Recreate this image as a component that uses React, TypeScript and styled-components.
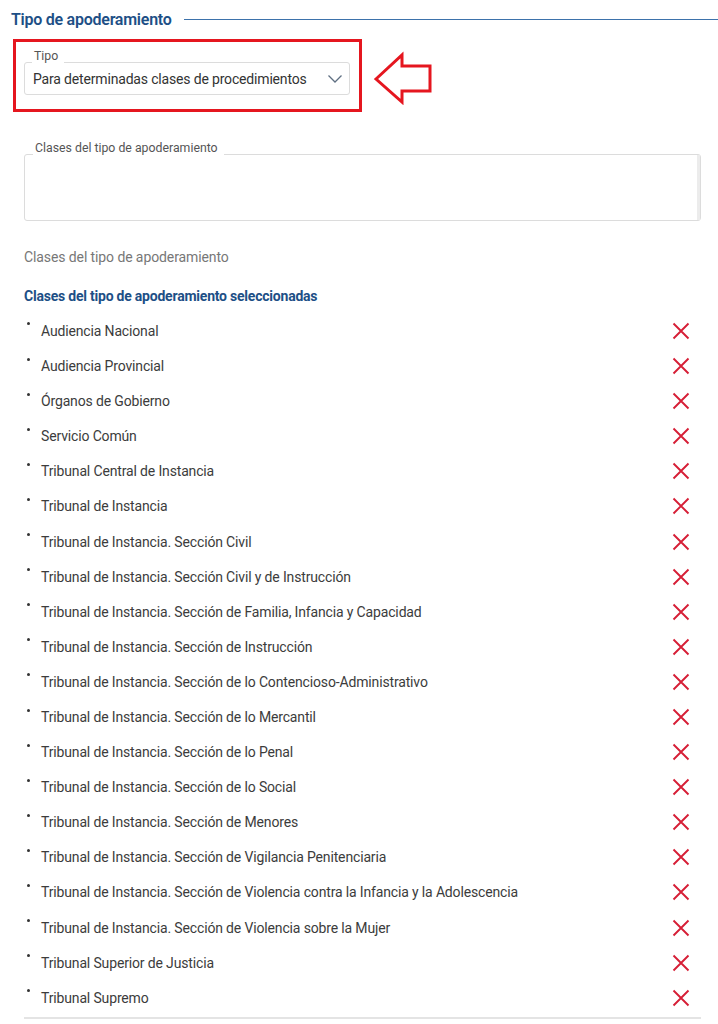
import React from "react";
import styled, { createGlobalStyle } from "styled-components";

const GlobalStyle = createGlobalStyle`
  html, body { margin: 0; padding: 0; background: #ffffff; }
  body { font-family: Roboto, "Noto Sans", "Liberation Sans", sans-serif; color: #3a3a3a; }
  * { box-sizing: border-box; }
`;

const Page = styled.div`
  width: 718px;
  display: flex;
  flex-direction: column;
`;

const SectionHeader = styled.div`
  height: 39px;
  display: flex;
  align-items: center;
  gap: 12px;
  padding-left: 11px;
`;

const SectionTitle = styled.h2`
  margin: 0;
  font-size: 16px;
  font-weight: 600;
  letter-spacing: -0.25px;
  color: #1d4f86;
  white-space: nowrap;
`;

const Rule = styled.div`
  flex: 1;
  height: 1px;
  background: #3d72ab;
`;

const TypeRow = styled.div`
  display: flex;
  align-items: center;
  margin-left: 13px;
`;

const HighlightBox = styled.div`
  width: 349px;
  height: 73px;
  border: 3px solid #e5161f;
  padding: 20px 9px 14px 8px;
`;

const Outlined = styled.div<{ $height: number }>`
  position: relative;
  height: ${(p) => p.$height}px;
  border: 1px solid #dcdcdc;
  border-radius: 3px;
  background: #fff;
`;

const FloatLabel = styled.span<{ $left: number; $padRight: number }>`
  position: absolute;
  top: -13px;
  left: ${(p) => p.$left}px;
  padding: 0 ${(p) => p.$padRight}px 0 2px;
  background: #fff;
  font-size: 12.3px;
  line-height: 13px;
  color: #555;
  white-space: nowrap;
`;

const SelectInner = styled.div`
  height: 100%;
  display: flex;
  align-items: center;
  justify-content: space-between;
  padding: 0 6px 0 8px;
  font-size: 14px;
  letter-spacing: -0.17px;
  color: #333;
`;

const ArrowMark = styled.svg`
  margin-left: 11px;
  margin-top: 4px;
  flex: none;
`;

const Content = styled.div`
  padding: 0 17px 0 24px;
  display: flex;
  flex-direction: column;
`;

const TextAreaWrap = styled.div`
  margin-top: 42px;
`;

const ScrollStrip = styled.div`
  position: absolute;
  top: 0;
  right: 0;
  bottom: 0;
  width: 3px;
  background: #ececec;
`;

const HelperText = styled.div`
  margin-top: 26px;
  font-size: 14px;
  line-height: 20px;
  letter-spacing: -0.1px;
  color: #777;
`;

const ListHeading = styled.h3`
  margin: 19px 0 0;
  font-size: 14px;
  line-height: 20px;
  font-weight: 700;
  letter-spacing: -0.22px;
  color: #1d4f86;
`;

const List = styled.ul`
  list-style: none;
  margin: 7.45px 0 0;
  padding: 0;
`;

const Item = styled.li`
  height: 35.1px;
  display: flex;
  align-items: center;
  padding-right: 11px;
`;

const Bullet = styled.span`
  width: 3px;
  height: 3px;
  border-radius: 50%;
  background: #333;
  margin: 0 11px 0 3px;
  transform: translateY(-7px);
  flex: none;
`;

const ItemText = styled.span`
  flex: 1;
  font-size: 14px;
  letter-spacing: -0.15px;
  color: #3c3c3c;
`;

const RemoveButton = styled.button`
  border: 0;
  background: transparent;
  padding: 0;
  width: 18px;
  height: 18px;
  display: flex;
  align-items: center;
  justify-content: center;
  cursor: pointer;
`;

const BottomBox = styled.div`
  margin-top: 1.5px;
  height: 12px;
  border-top: 2px solid #e4e4e4;
`;

const items = [
  "Audiencia Nacional",
  "Audiencia Provincial",
  "Órganos de Gobierno",
  "Servicio Común",
  "Tribunal Central de Instancia",
  "Tribunal de Instancia",
  "Tribunal de Instancia. Sección Civil",
  "Tribunal de Instancia. Sección Civil y de Instrucción",
  "Tribunal de Instancia. Sección de Familia, Infancia y Capacidad",
  "Tribunal de Instancia. Sección de Instrucción",
  "Tribunal de Instancia. Sección de lo Contencioso-Administrativo",
  "Tribunal de Instancia. Sección de lo Mercantil",
  "Tribunal de Instancia. Sección de lo Penal",
  "Tribunal de Instancia. Sección de lo Social",
  "Tribunal de Instancia. Sección de Menores",
  "Tribunal de Instancia. Sección de Vigilancia Penitenciaria",
  "Tribunal de Instancia. Sección de Violencia contra la Infancia y la Adolescencia",
  "Tribunal de Instancia. Sección de Violencia sobre la Mujer",
  "Tribunal Superior de Justicia",
  "Tribunal Supremo",
];

const Chevron = () => (
  <svg width="16" height="10" viewBox="0 0 16 10">
    <polyline points="1.5,1.5 8,8 14.5,1.5" fill="none" stroke="#5f6f82" strokeWidth="1.3" />
  </svg>
);

const XIcon = () => (
  <svg width="18" height="18" viewBox="0 0 18 18">
    <path d="M1.5 1.5 L16.5 16.5 M16.5 1.5 L1.5 16.5" stroke="#d61e36" strokeWidth="1.9" strokeLinecap="butt" />
  </svg>
);

export default function App() {
  return (
    <Page>
      <GlobalStyle />
      <SectionHeader>
        <SectionTitle>Tipo de apoderamiento</SectionTitle>
        <Rule />
      </SectionHeader>
      <TypeRow>
        <HighlightBox>
          <Outlined $height={33}>
            <FloatLabel $left={7} $padRight={6}>Tipo</FloatLabel>
            <SelectInner>
              <span>Para determinadas clases de procedimientos</span>
              <Chevron />
            </SelectInner>
          </Outlined>
        </HighlightBox>
        <ArrowMark width="60" height="54" viewBox="0 0 60 54">
          <polygon
            points="3,28 29,4 29,15 57,15 57,40 29,40 29,51"
            fill="none"
            stroke="#e5161f"
            strokeWidth="3"
            strokeLinejoin="miter"
          />
        </ArrowMark>
      </TypeRow>
      <Content>
        <TextAreaWrap>
          <Outlined $height={67}>
            <FloatLabel $left={8} $padRight={6}>Clases del tipo de apoderamiento</FloatLabel>
            <ScrollStrip />
          </Outlined>
        </TextAreaWrap>
        <HelperText>Clases del tipo de apoderamiento</HelperText>
        <ListHeading>Clases del tipo de apoderamiento seleccionadas</ListHeading>
        <List>
          {items.map((t) => (
            <Item key={t}>
              <Bullet />
              <ItemText>{t}</ItemText>
              <RemoveButton aria-label={`Eliminar ${t}`}>
                <XIcon />
              </RemoveButton>
            </Item>
          ))}
        </List>
        <BottomBox />
      </Content>
    </Page>
  );
}
